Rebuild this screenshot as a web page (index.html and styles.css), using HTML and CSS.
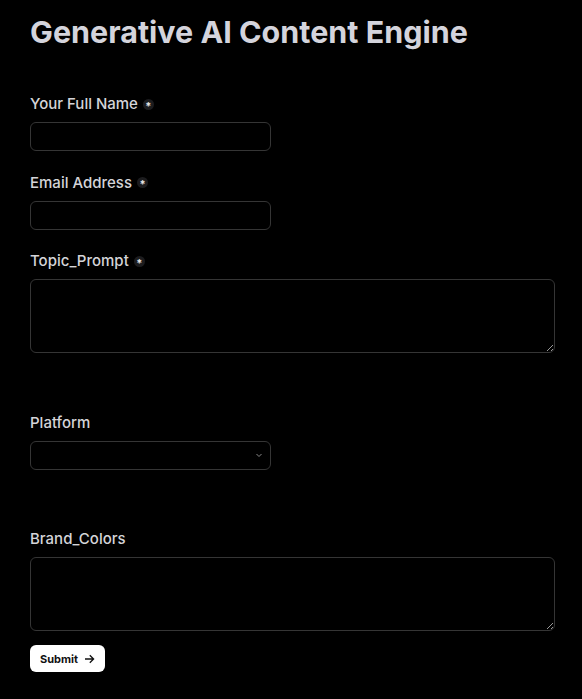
FILE: index.html
```html
<!DOCTYPE html>
<html lang="en">
<head>
  <meta charset="UTF-8">
  <meta name="viewport" content="width=device-width, initial-scale=1.0">
  <title>Generative AI Content Engine</title>
  <link rel="stylesheet" href="styles.css">
</head>
<body>
  <form class="form">
    <h1 class="title">Generative AI Content Engine</h1>

    <div class="field">
      <label class="label">Your Full Name <span class="req">*</span></label>
      <input class="input" type="text">
    </div>

    <div class="field">
      <label class="label">Email Address <span class="req">*</span></label>
      <input class="input" type="email">
    </div>

    <div class="field">
      <label class="label">Topic_Prompt <span class="req">*</span></label>
      <textarea class="textarea"></textarea>
    </div>

    <div class="field field-spaced">
      <label class="label">Platform</label>
      <div class="select-wrap">
        <select class="select"><option></option></select>
        <svg class="chevron" width="8" height="8" viewBox="0 0 8 8"><path d="M1.5 3 L4 5.5 L6.5 3" fill="none" stroke="#8a8a8a" stroke-width="1"/></svg>
      </div>
    </div>

    <div class="field field-spaced field-last">
      <label class="label">Brand_Colors</label>
      <textarea class="textarea"></textarea>
    </div>

    <button class="submit" type="button">Submit
      <svg width="11" height="10" viewBox="0 0 11 10"><path d="M1 5 H9.5 M5.8 1.2 L9.6 5 L5.8 8.8" fill="none" stroke="#111" stroke-width="1.3"/></svg>
    </button>
  </form>
</body>
</html>
```

FILE: styles.css
```css
html {
  color-scheme: dark;
}

body {
  margin: 0;
  background: #000;
  color: #d4d4d8;
  font-family: Inter, 'Liberation Sans', sans-serif;
}

.form {
  padding: 14px 27px 20px 30px;
}

.title {
  margin: 0 0 44px;
  font-size: 30.5px;
  font-weight: 700;
  line-height: 36px;
  color: #d4d4dc;
}

.field {
  display: flex;
  flex-direction: column;
  margin-bottom: 21.5px;
}

.field-spaced {
  margin-top: 60px;
}

.field-last {
  margin-top: 59px;
  margin-bottom: 14px;
}

.label {
  display: flex;
  align-items: center;
  gap: 5px;
  font-size: 15px;
  font-weight: 550;
  line-height: 20px;
  margin-bottom: 8px;
}

.req {
  display: inline-flex;
  align-items: center;
  justify-content: center;
  width: 11px;
  height: 11px;
  border-radius: 50%;
  background: #1c1c1e;
  color: #e5e5e5;
  font-size: 11px;
  font-weight: 700;
  line-height: 1;
  padding-top: 4px;
  box-sizing: border-box;
}

.input,
.select {
  box-sizing: border-box;
  width: 241px;
  height: 29px;
  background: #000;
  border: 1px solid #353535;
  border-radius: 6px;
  color: #ddd;
  font: inherit;
  font-size: 14px;
  padding: 0 10px;
  outline: none;
}

.select {
  appearance: none;
  -webkit-appearance: none;
}

.select-wrap {
  position: relative;
  width: 241px;
}

.chevron {
  position: absolute;
  right: 8px;
  top: 10px;
  pointer-events: none;
}

.textarea {
  box-sizing: border-box;
  width: 100%;
  height: 74px;
  background: #000;
  border: 1px solid #353535;
  border-radius: 6px;
  color: #ddd;
  font: inherit;
  font-size: 14px;
  padding: 8px 10px;
  outline: none;
}

.submit {
  display: inline-flex;
  align-items: center;
  gap: 6px;
  height: 27px;
  padding: 0 10px;
  background: #fff;
  color: #111;
  border: none;
  border-radius: 6px;
  font-family: Inter, 'Liberation Sans', sans-serif;
  font-size: 11px;
  font-weight: 700;
}
```
